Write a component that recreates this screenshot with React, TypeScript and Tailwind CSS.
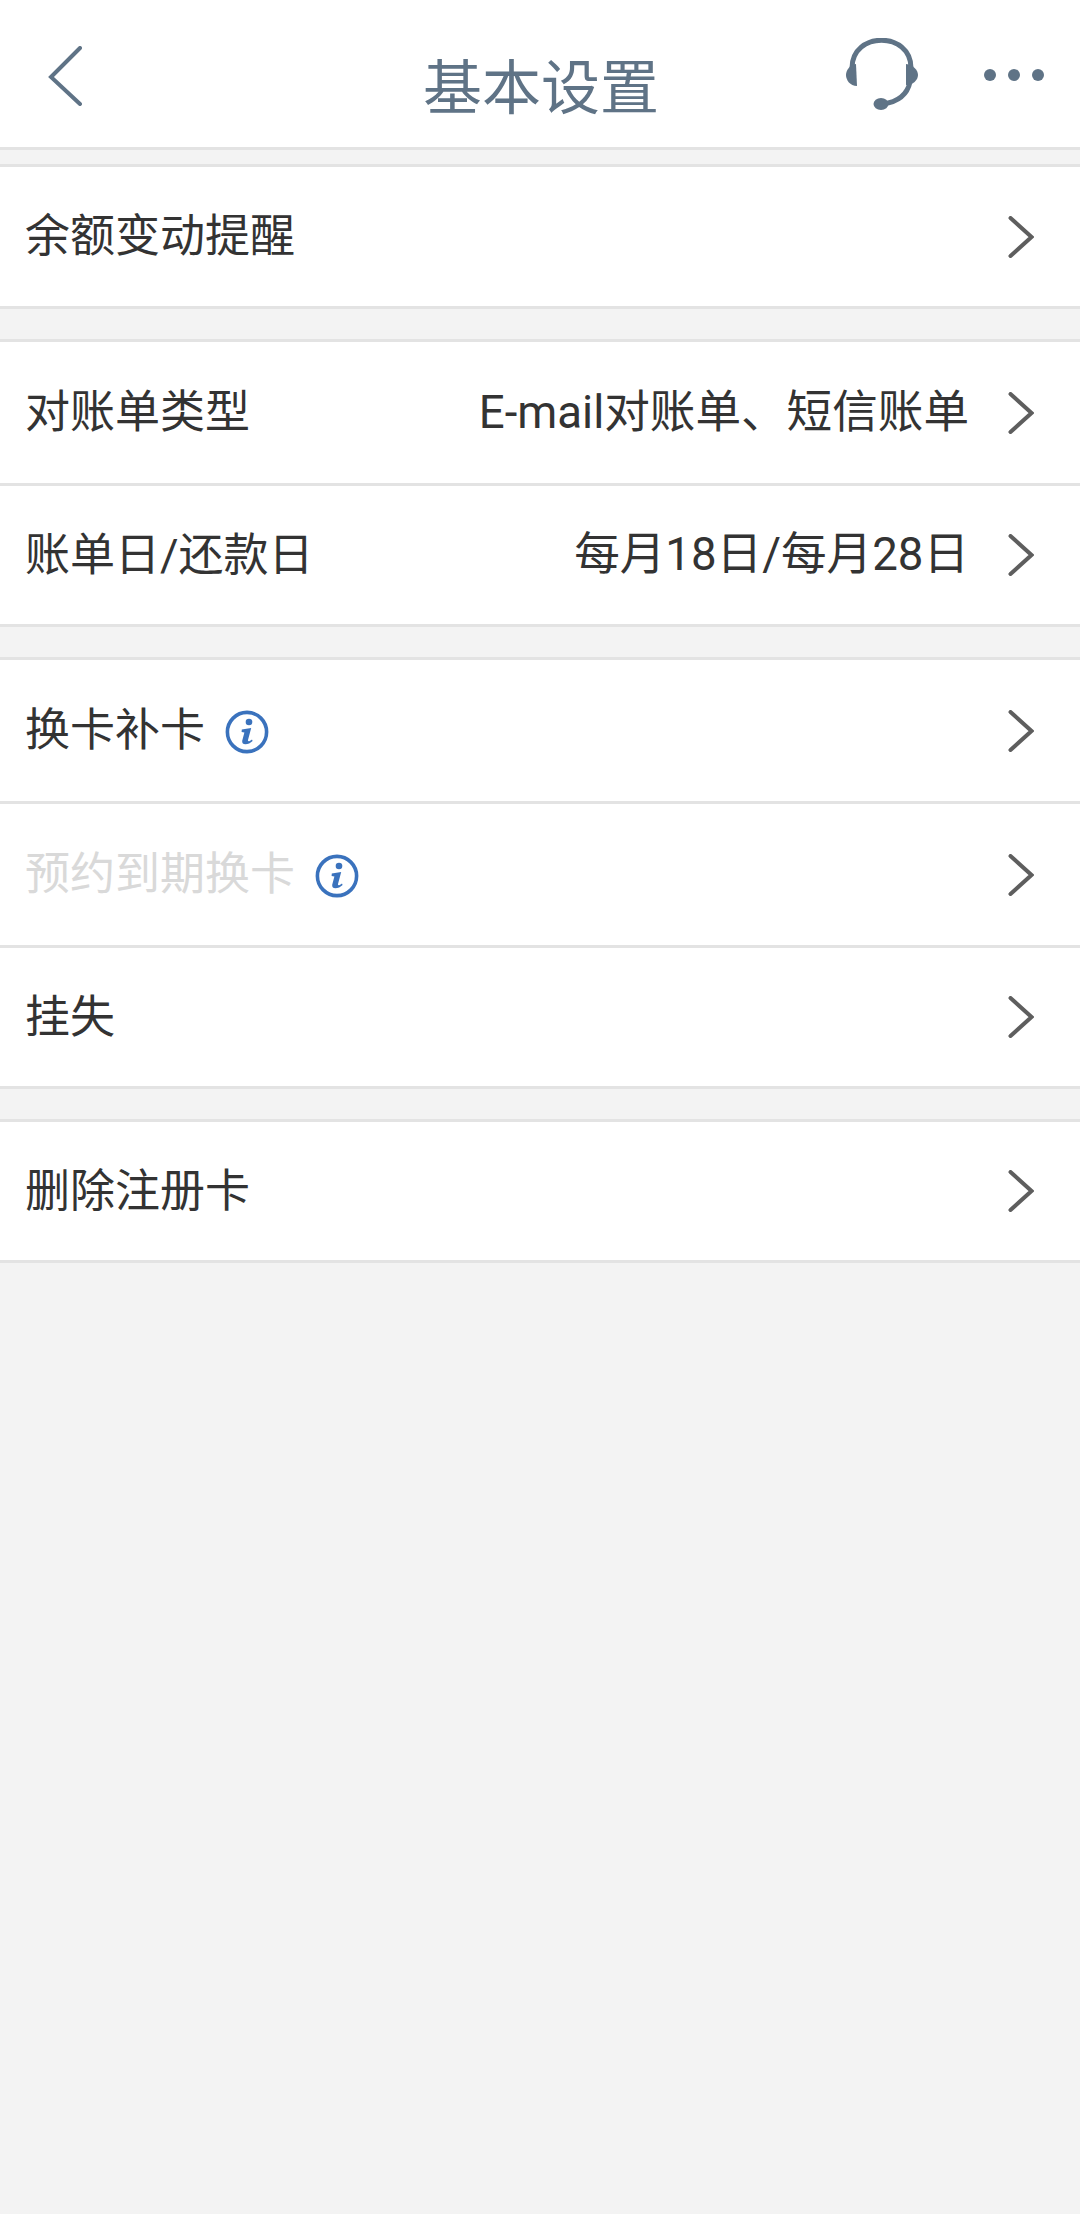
const FONT = "font-['Roboto','Noto_Sans_CJK_SC',sans-serif]";

function Chevron() {
  return (
    <svg width="26" height="42" viewBox="0 0 26 42" className="shrink-0" fill="none">
      <path d="M2.5 2 L23.5 21 L2.5 40" stroke="#5e5e5e" strokeWidth="4" strokeLinecap="round" strokeLinejoin="miter" />
    </svg>
  );
}

function Info() {
  return (
    <svg width="44" height="44" viewBox="0 0 44 44" className="shrink-0 ml-[20px] mt-[2px]" fill="none">
      <circle cx="22" cy="22" r="19.6" stroke="#3a72bd" strokeWidth="3.6" />
      <circle cx="24" cy="12" r="3.3" fill="#3a72bd" />
      <path d="M16.8 19.6 L26.2 18 L23 30 C22.6 31.6 24.4 31.6 27 29.4 L27.6 31 C24 34.8 16.4 36 17.2 30.8 L19.4 22.6 L16.6 22 Z" fill="#3a72bd" />
    </svg>
  );
}

type RowProps = { label: string; value?: string; info?: boolean; muted?: boolean; h: number };

function Row({ label, value, info, muted, h }: RowProps) {
  return (
    <div className="flex items-center bg-white pl-[25px] pr-[46px] border-b-[3px] border-[#e3e3e3]" style={{ height: h }}>
      <span className={`text-[45px] leading-none whitespace-nowrap ${muted ? "text-[#d9d9d9]" : "text-[#333333]"}`}>{label}</span>
      {info && <Info />}
      <span className="flex-1" />
      {value && <span className="text-[45.6px] leading-none text-[#333333] whitespace-nowrap mr-[39px]">{value}</span>}
      <Chevron />
    </div>
  );
}

function Group({ first, children }: { first?: boolean; children: React.ReactNode }) {
  return <div className={`border-t-[3px] border-[#e3e3e3] ${first ? "mt-[14px]" : "mt-[30px]"}`}>{children}</div>;
}

export default function App() {
  return (
    <div className={`w-[1080px] h-[2214px] bg-[#f3f3f3] ${FONT}`}>
      <header className="relative flex items-center justify-between h-[150px] bg-white border-b-[3px] border-[#e3e3e3] pl-[48px] pr-[36px]">
        <svg width="34" height="60" viewBox="0 0 34 60" fill="none" className="mt-[5px]">
          <path d="M32 2 L3 31 L32 58" stroke="#5f7386" strokeWidth="4" strokeLinecap="round" />
        </svg>
        <h1 className="absolute left-[423px] top-[59px] text-[59px] leading-none font-normal text-[#5f7386] whitespace-nowrap">基本设置</h1>
        <div className="flex items-center">
          <svg width="74" height="74" viewBox="0 0 74 74" fill="none" className="mt-[3px]">
            <path d="M7 30 C7 -7 66 -7 66 30" stroke="#5f7386" strokeWidth="5" />
            <path d="M65 44 C62 58 52 64 38 66" stroke="#5f7386" strokeWidth="5" />
            <path d="M11 26 C4 27 1 33 1 37 C1 42 5 48 12 48 Z" fill="#5f7386" />
            <path d="M61 26 C68 27 73 32 73 37 C73 42 68 47 61 47 Z" fill="#5f7386" />
            <ellipse cx="36" cy="66" rx="7.5" ry="6" fill="#5f7386" />
          </svg>
          <div className="flex gap-[12px] ml-[65px] mt-[3px]">
            <span className="w-[12px] h-[12px] rounded-full bg-[#5f7386]" />
            <span className="w-[12px] h-[12px] rounded-full bg-[#5f7386]" />
            <span className="w-[12px] h-[12px] rounded-full bg-[#5f7386]" />
          </div>
        </div>
      </header>
      <Group first>
        <Row h={142} label="余额变动提醒" />
      </Group>
      <Group>
        <Row h={144} label="对账单类型" value="E-mail对账单、短信账单" />
        <Row h={141} label="账单日/还款日" value="每月18日/每月28日" />
      </Group>
      <Group>
        <Row h={144} label="换卡补卡" info />
        <Row h={144} label="预约到期换卡" info muted />
        <Row h={141} label="挂失" />
      </Group>
      <Group>
        <Row h={141} label="删除注册卡" />
      </Group>
    </div>
  );
}
